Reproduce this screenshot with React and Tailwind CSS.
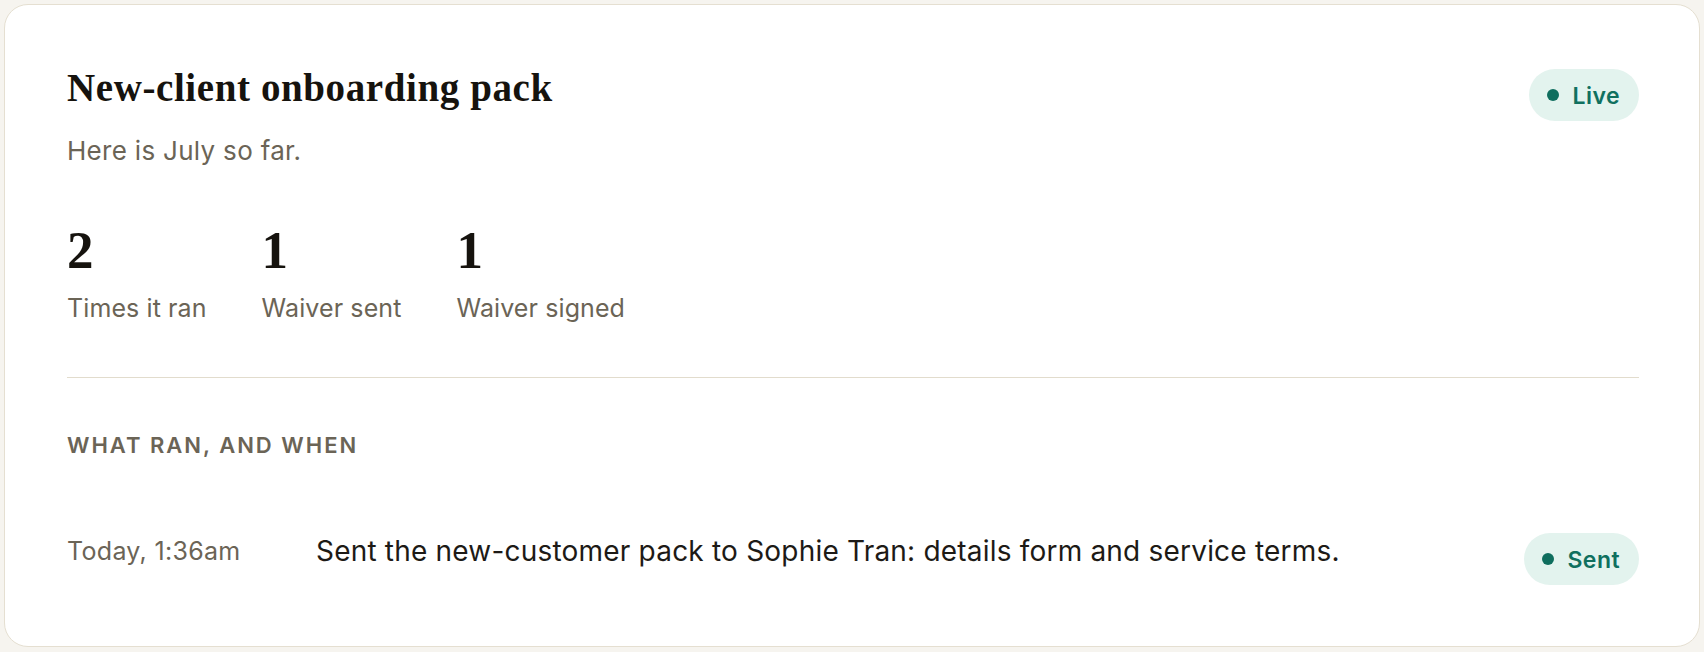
import React from "react";

const serif = { fontFamily: '"Liberation Serif", "DejaVu Serif", serif' };

function StatusPill({ label, className = "" }) {
  return (
    <span
      className={`inline-flex h-[52px] items-center gap-[13px] rounded-full bg-[#e3f3ee] pl-[18px] pr-[19px] text-[23px] font-semibold leading-none tracking-[0.02em] text-[#10705f] ${className}`}
    >
      <span className="h-[12px] w-[12px] shrink-0 rounded-full bg-[#0f6e5e]" />
      <span className="mt-[2px]">{label}</span>
    </span>
  );
}

function Stat({ value, label }) {
  return (
    <div className="flex flex-col">
      <span style={serif} className="text-[53px] font-bold leading-none text-[#16130e]">
        {value}
      </span>
      <span className="mt-[19px] text-[25px] leading-none tracking-[0.1px] text-[#6b6456]">
        {label}
      </span>
    </div>
  );
}

export default function App() {
  return (
    <div
      className="min-h-[652px] bg-[#f6f4ef] p-1"
      style={{ fontFamily: 'Inter, "Liberation Sans", sans-serif' }}
    >
      <div className="rounded-[24px] border border-[#e5dfd1] bg-white pb-[61px] pl-[62px] pr-[60px] pt-[63px]">
        {/* header */}
        <div className="flex items-start justify-between">
          <div className="flex flex-col">
            <h1
              style={serif}
              className="text-[39px] font-bold leading-none tracking-[0.6px] text-[#16130e]"
            >
              New-client onboarding pack
            </h1>
            <p className="mt-[31px] text-[26px] leading-none tracking-[0.3px] text-[#6b6456]">
              Here is July so far.
            </p>
          </div>
          <StatusPill label="Live" className="mt-[1px]" />
        </div>

        {/* totals */}
        <div className="mt-[60px] flex gap-[55px]">
          <Stat value="2" label="Times it ran" />
          <Stat value="1" label="Waiver sent" />
          <Stat value="1" label="Waiver signed" />
        </div>

        <div className="mt-[56px] h-px bg-[#e2dccd]" />

        {/* activity */}
        <h2 className="mt-[56px] text-[22px] font-semibold uppercase leading-none tracking-[2px] text-[#6b6456]">
          What ran, and when
        </h2>

        <div className="mt-[77px] flex items-start">
          <span className="mt-[6px] w-[249px] shrink-0 text-[25px] leading-none tracking-[0.3px] text-[#6b6456]">
            Today, 1:36am
          </span>
          <span className="mt-[4px] flex-1 text-[28px] leading-none tracking-[0.2px] text-[#1d1a16]">
            Sent the new-customer pack to Sophie Tran: details form and service terms.
          </span>
          <StatusPill label="Sent" />
        </div>
      </div>
    </div>
  );
}
